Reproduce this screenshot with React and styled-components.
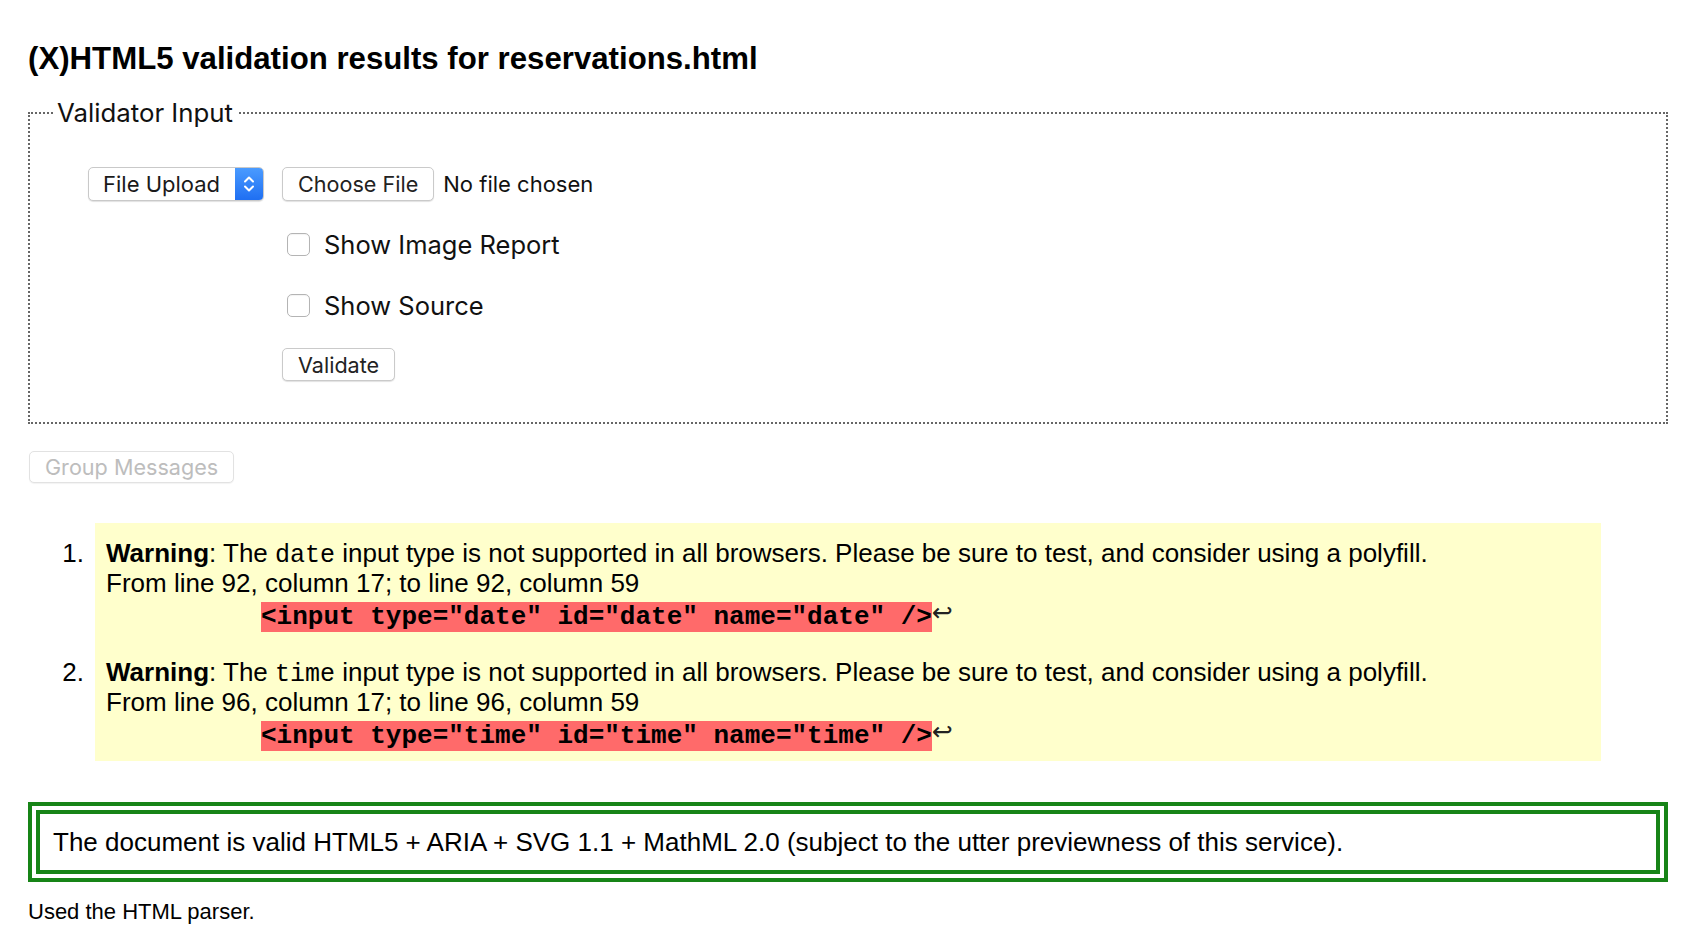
import React from 'react';
import styled, { createGlobalStyle } from 'styled-components';

const GlobalStyle = createGlobalStyle`
  html, body {
    margin: 0;
    padding: 0;
    background: #fff;
  }
  body {
    font-family: "Liberation Sans", Arial, Helvetica, sans-serif;
    color: #000;
  }
`;

const uiFont = `Inter, "Noto Sans", "Liberation Sans", sans-serif`;

// Page shell
const Page = styled.div`
  width: 1640px;
  margin-left: 28px;
  padding-bottom: 20px;
`;

const Title = styled.h2`
  margin: 41px 0 0;
  font-size: 31.2px;
  line-height: 36px;
  font-weight: bold;
`;

// Validator input form
const Fieldset = styled.fieldset`
  margin: 21px 0 0;
  padding: 39px 0 41px 0;
  border: 2px dotted #666;
  min-width: 0;
`;

const Legend = styled.legend`
  margin-left: 23px;
  padding: 0 4px;
  font-family: ${uiFont};
  font-size: 25.8px;
  line-height: 30px;
  color: #111;
`;

const FormColumn = styled.div`
  display: flex;
  flex-direction: column;
  gap: 25px;
  padding-left: 58px;
`;

const SourceRow = styled.div`
  display: flex;
  align-items: center;
  height: 34px;
  gap: 18px;
`;

const OptionsColumn = styled.div`
  display: flex;
  flex-direction: column;
  gap: 25px;
  margin-left: 194px;
`;

const SelectBox = styled.div`
  display: flex;
  align-items: stretch;
  width: 176px;
  height: 34px;
  box-sizing: border-box;
  border: 1px solid #c9c9c9;
  border-radius: 5px;
  background: #fff;
  box-shadow: 0 1px 1px rgba(0, 0, 0, 0.12);
  overflow: hidden;
  font-family: ${uiFont};
  font-size: 22px;
  color: #1a1a1a;
`;

const SelectLabel = styled.span`
  flex: 1;
  display: flex;
  align-items: center;
  padding-left: 14px;
`;

const SelectArrows = styled.span`
  width: 28px;
  display: flex;
  align-items: center;
  justify-content: center;
  background: linear-gradient(#4a9bff, #1f6ff2);
`;

const Button = styled.button`
  height: ${p => p.$h || 33}px;
  padding: 0 15px;
  box-sizing: border-box;
  border: 1px solid ${p => (p.disabled ? '#e2e2e2' : '#cacaca')};
  border-radius: 5px;
  background: #fff;
  box-shadow: 0 1px 1px rgba(0, 0, 0, ${p => (p.disabled ? 0.05 : 0.12)});
  font-family: ${uiFont};
  font-size: 21.6px;
  color: ${p => (p.disabled ? '#bdbdbd' : '#222')};
  cursor: default;
  align-self: flex-start;
`;

const FileState = styled.span`
  margin-left: -9px;
  font-family: ${uiFont};
  font-size: 22px;
  color: #111;
`;

const CheckRow = styled.label`
  display: flex;
  align-items: center;
  height: 36px;
  gap: 14px;
  padding-left: 5px;
  font-family: ${uiFont};
  font-size: 25.5px;
  color: #111;
`;

const CheckBox = styled.span`
  width: 23px;
  height: 23px;
  box-sizing: border-box;
  border: 1px solid #b4b4b4;
  border-radius: 5px;
  background: #fff;
  box-shadow: inset 0 1px 1px rgba(0, 0, 0, 0.05);
`;

const GroupButton = styled(Button)`
  display: block;
  margin-top: 27px;
  height: 32px;
  margin-left: 1px;
`;

// Messages
const MessageList = styled.ol`
  list-style: none;
  margin: 40px 0 0;
  padding: 0;
  font-size: 26px;
  line-height: 30px;
`;

const MessageItem = styled.li`
  display: flex;
`;

const Marker = styled.span`
  width: 67px;
  box-sizing: border-box;
  padding: 15px 11px 0 0;
  text-align: right;
`;

const MessageBody = styled.div`
  width: 1506px;
  box-sizing: border-box;
  padding: 15px 11px 9px;
  background: #ffffcc;
`;

const MessageText = styled.p`
  margin: 0;
`;

const InlineCode = styled.code`
  font-family: "Liberation Mono", "Courier New", monospace;
  font-size: 25px;
  line-height: 0;
`;

const Extract = styled.p`
  margin: 0;
  padding-left: 155px;
  line-height: 35px;
  white-space: pre;
`;

const Highlight = styled.mark`
  background: #ff6a6a;
  color: #000;
  font-family: "Liberation Mono", "Courier New", monospace;
  font-weight: bold;
  font-size: 26px;
  line-height: 0;
`;

const LineEnd = styled.span`
  font-family: "DejaVu Sans", sans-serif;
  font-size: 25px;
  line-height: 0;
  color: #222;
  vertical-align: 3px;
`;

const SuccessBox = styled.div`
  margin-top: 41px;
  border: 12px double #178417;
  padding: 13px;
  font-size: 26px;
  line-height: 30px;
`;

const Note = styled.p`
  margin: 15px 0 0;
  font-size: 22px;
  line-height: 30px;
`;

const Arrows = () => (
  <svg width="14" height="20" viewBox="0 0 14 20" fill="none" stroke="#fff" strokeWidth="2" strokeLinecap="round" strokeLinejoin="round">
    <path d="M3 7.5 L7 3.5 L11 7.5" />
    <path d="M3 12.5 L7 16.5 L11 12.5" />
  </svg>
);

const messages = [
  { type: 'date', line: 92 },
  { type: 'time', line: 96 },
];

const App = () => (
  <>
    <GlobalStyle />
    <Page>
      <Title>(X)HTML5 validation results for reservations.html</Title>

      <Fieldset>
        <Legend>Validator Input</Legend>
        <FormColumn>
          <SourceRow>
            <SelectBox>
              <SelectLabel>File Upload</SelectLabel>
              <SelectArrows><Arrows /></SelectArrows>
            </SelectBox>
            <Button $h={34}>Choose File</Button>
            <FileState>No file chosen</FileState>
          </SourceRow>
          <OptionsColumn>
            <CheckRow><CheckBox />Show Image Report</CheckRow>
            <CheckRow><CheckBox />Show Source</CheckRow>
            <Button>Validate</Button>
          </OptionsColumn>
        </FormColumn>
      </Fieldset>

      <GroupButton disabled>Group Messages</GroupButton>

      <MessageList>
        {messages.map((m, i) => (
          <MessageItem key={m.type}>
            <Marker>{i + 1}.</Marker>
            <MessageBody>
              <MessageText>
                <strong>Warning</strong>: The <InlineCode>{m.type}</InlineCode> input type is not supported in all browsers. Please be sure to test, and consider using a polyfill.
              </MessageText>
              <MessageText>
                From line {m.line}, column 17; to line {m.line}, column 59
              </MessageText>
              <Extract>
                <Highlight>{`<input type="${m.type}" id="${m.type}" name="${m.type}" />`}</Highlight>
                <LineEnd>↩</LineEnd>
              </Extract>
            </MessageBody>
          </MessageItem>
        ))}
      </MessageList>

      <SuccessBox>
        The document is valid HTML5 + ARIA + SVG 1.1 + MathML 2.0 (subject to the utter previewness of this service).
      </SuccessBox>

      <Note>Used the HTML parser.</Note>
    </Page>
  </>
);

export default App;
